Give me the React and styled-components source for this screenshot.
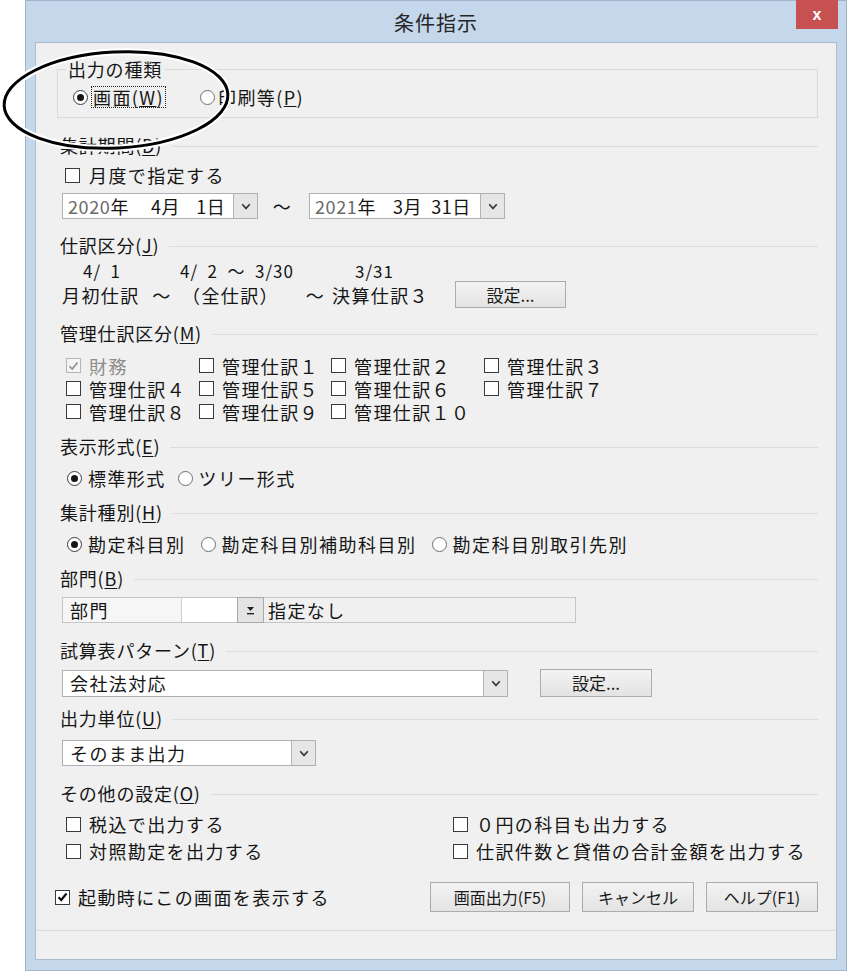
import React from "react";
import styled, { createGlobalStyle } from "styled-components";

const FONT = `"Noto Sans CJK JP", "Noto Sans", sans-serif`;

const Global = createGlobalStyle`
  html, body { margin: 0; padding: 0; background: #ffffff; }
  body { font-family: ${FONT}; color: #151515; }
  * { box-sizing: border-box; }
  fieldset { margin: 0; }
`;

const Page = styled.div`
  position: relative;
  width: 848px;
  height: 972px;
  overflow: hidden;
`;

const Frame = styled.div`
  margin-left: 25px;
  width: 822px;
  height: 971px;
  background: #c4d7eb;
  border: 1px solid #a2b6cb;
  display: flex;
  flex-direction: column;
`;

const TitleBar = styled.div`
  height: 41px;
  display: grid;
  grid-template-columns: 1fr auto 1fr;
  align-items: start;
`;

const Title = styled.div`
  grid-column: 2;
  align-self: center;
  font-size: 20px;
  letter-spacing: 1px;
  color: #262626;
  margin-top: 2px;
`;

const CloseButton = styled.div`
  grid-column: 3;
  justify-self: end;
  margin-right: 8px;
  margin-top: -1px;
  width: 42px;
  height: 29px;
  background: #c75050;
  color: #fff;
  display: flex;
  align-items: center;
  justify-content: center;
  font-family: "Liberation Sans", sans-serif;
  font-weight: bold;
  font-size: 16px;
`;

const Client = styled.div`
  flex: 1;
  margin: 0 9px 10px 9px;
  background: #f0f0f0;
  border: 1px solid #a9bcd0;
  display: flex;
  flex-direction: column;
`;

const Content = styled.div`
  flex: 1;
  padding: 0 18px 0 24px;
  display: flex;
  flex-direction: column;
  font-size: 18px;
  line-height: 22px;
  letter-spacing: 1.4px;
`;

const Footer = styled.div`
  height: 29px;
  border-top: 1px solid #dcdcdc;
`;

const GroupBox = styled.fieldset`
  margin: 15px 0 0 -3px;
  border: 1px solid #dadada;
  padding: 0 0 9px 0;
  min-width: 0;
`;

const Legend = styled.legend`
  font-size: 18px;
  line-height: 22px;
  letter-spacing: 0.8px;
  padding: 0 2px;
  margin-left: 8px;
`;

const Header = styled.div`
  display: flex;
  align-items: center;
  height: 22px;
  margin-top: ${(p) => p.$mt}px;
  letter-spacing: 0.8px;
  white-space: nowrap;
  &::after {
    content: "";
    flex: 1;
    height: 1px;
    margin: 2px 0 0 10px;
    background: #dcdcdc;
  }
  u { text-decoration-thickness: 1px; text-underline-offset: 2px; }
`;

const Row = styled.div`
  display: flex;
  align-items: center;
  height: ${(p) => p.$h || 22}px;
  margin-top: ${(p) => p.$mt || 0}px;
  padding-left: ${(p) => p.$pl || 0}px;
  letter-spacing: ${(p) => p.$ls ?? 1.4}px;
  white-space: nowrap;
`;

const Item = styled.label`
  display: flex;
  align-items: center;
  gap: ${(p) => p.$gap ?? 8}px;
  margin-left: ${(p) => p.$ml || 0}px;
  color: ${(p) => (p.$disabled ? "#8c8c8c" : "inherit")};
  white-space: nowrap;
`;

const BoxMark = styled.span`
  flex: none;
  width: 15px;
  height: 15px;
  border: 1px solid ${(p) => (p.$disabled ? "#b5b5b5" : "#3a3a3a")};
  background: ${(p) => (p.$disabled ? "#f4f4f4" : "#ffffff")};
  display: flex;
  align-items: center;
  justify-content: center;
`;

const RadioMark = styled.span`
  flex: none;
  width: 15px;
  height: 15px;
  border-radius: 50%;
  border: 1px solid ${(p) => (p.$on ? "#3c3c3c" : "#6f6f6f")};
  background: #ffffff;
  display: flex;
  align-items: center;
  justify-content: center;
  &::after {
    content: "";
    width: 7px;
    height: 7px;
    border-radius: 50%;
    background: ${(p) => (p.$on ? "#151515" : "transparent")};
  }
`;

const FocusText = styled.span`
  border: 1px dotted #222;
  padding: 0 1px;
  line-height: 20px;
`;

const Check = ({ checked, disabled }) => (
  <BoxMark $disabled={disabled}>
    {checked && (
      <svg width="11" height="10" viewBox="0 0 11 10">
        <path
          d="M1.5 5.2 L4.2 8 L9.5 1.5"
          fill="none"
          stroke={disabled ? "#8f8f8f" : "#111"}
          strokeWidth={disabled ? 1.6 : 2.2}
        />
      </svg>
    )}
  </BoxMark>
);

const CheckItem = ({ children, checked, disabled, ml, gap }) => (
  <Item $disabled={disabled} $ml={ml} $gap={gap}>
    <Check checked={checked} disabled={disabled} />
    <span>{children}</span>
  </Item>
);

const RadioItem = ({ children, on, ml, gap = 6 }) => (
  <Item $ml={ml} $gap={gap}>
    <RadioMark $on={on} />
    {children}
  </Item>
);

const Combo = styled.div`
  display: flex;
  align-items: stretch;
  width: ${(p) => p.$w}px;
  height: ${(p) => p.$h || 26}px;
  margin-left: 2px;
  background: #ffffff;
  border: 1px solid #aeb0b5;
  flex: none;
`;

const ComboText = styled.div`
  flex: 1;
  display: flex;
  align-items: center;
  padding-left: ${(p) => p.$pl ?? 7}px;
  white-space: pre;
  letter-spacing: ${(p) => p.$ls ?? 1.4}px;
`;

const Gray = styled.span`
  color: #6a6a6a;
  letter-spacing: 0.6px;
`;

const DatePart = styled.span`
  margin-left: ${(p) => p.$ml || 0}px;
`;

const DropBtn = styled.div`
  width: 24px;
  flex: none;
  background: #e6e6e6;
  border-left: 1px solid #b4b4b4;
  display: flex;
  align-items: center;
  justify-content: center;
`;

const Chevron = () => (
  <svg width="10" height="7" viewBox="0 0 10 7">
    <path d="M1.2 1.2 L5 5.4 L8.8 1.2" fill="none" stroke="#3a3a3a" strokeWidth="1.7" />
  </svg>
);

const Tilde = styled.span`
  width: 49px;
  text-align: center;
  flex: none;
`;

const Button = styled.div`
  width: ${(p) => p.$w}px;
  height: ${(p) => p.$h || 30}px;
  margin-left: ${(p) => p.$ml || 0}px;
  flex: none;
  display: flex;
  align-items: center;
  justify-content: center;
  background: linear-gradient(#f3f3f3, #e3e3e3);
  border: 1px solid #acacac;
  font-size: ${(p) => p.$fs || 16}px;
  letter-spacing: ${(p) => p.$ls ?? 0}px;
  color: #1a1a1a;
`;

const JournalGrid = styled.div`
  display: grid;
  grid-template-columns: 80px 40px 117px 33px 105px auto;
  grid-template-rows: 19px 27px;
  row-gap: 1px;
  margin: 5px 0 0 2px;
  align-items: center;
  white-space: nowrap;
`;

const DateLabel = styled.span`
  grid-row: 1;
  grid-column: ${(p) => p.$col};
  justify-self: ${(p) => p.$justify || "center"};
  padding-left: ${(p) => p.$pl || 0}px;
  font-size: 17px;
  letter-spacing: 1px;
  white-space: pre;
`;

const JournalCell = styled.span`
  grid-row: 2;
  grid-column: ${(p) => p.$col};
  justify-self: ${(p) => p.$justify || "start"};
  margin-left: ${(p) => p.$ml || 0}px;
`;

const MgmtGrid = styled.div`
  display: grid;
  grid-template-columns: 133px 132px 153px auto;
  grid-auto-rows: 23px;
  margin-top: 10px;
  padding-left: 6px;
  align-items: center;
`;

const OtherGrid = styled.div`
  display: grid;
  grid-template-columns: 387px auto;
  grid-auto-rows: 24px;
  row-gap: 3px;
  margin-top: 8px;
  padding-left: 6px;
  align-items: center;
`;

const Field = styled.div`
  display: flex;
  width: 514px;
  height: 26px;
  margin: 8px 0 0 2px;
  border: 1px solid #c6c6c6;
  background: #f0f0f0;
`;

const FieldLabel = styled.div`
  width: 118px;
  display: flex;
  align-items: center;
  padding-left: 7px;
  background: #f6f6f6;
`;

const FieldInput = styled.div`
  width: 56px;
  background: #ffffff;
  border-left: 1px solid #d0d0d0;
`;

const FieldBtn = styled.div`
  width: 27px;
  background: #e4e4e4;
  border: 1px solid #a8a8a8;
  margin: -1px 0;
  display: flex;
  align-items: center;
  justify-content: center;
`;

const FieldValue = styled.div`
  flex: 1;
  display: flex;
  align-items: center;
  padding-left: 4px;
  background: #f0f0f0;
`;

const BottomRow = styled.div`
  display: flex;
  align-items: center;
  height: 30px;
  margin-top: 19px;
`;

const Buttons = styled.div`
  margin-left: auto;
  display: flex;
  gap: 12px;
`;

const Annotation = styled.svg`
  position: absolute;
  left: 0;
  top: 46px;
  pointer-events: none;
`;

export default function App() {
  return (
    <Page>
      <Global />
      <Frame>
        <TitleBar>
          <Title>条件指示</Title>
          <CloseButton>x</CloseButton>
        </TitleBar>
        <Client>
          <Content>
            <GroupBox>
              <Legend>出力の種類</Legend>
              <Row $mt={6} $pl={15}>
                <RadioItem on gap={3}>
                  <FocusText>
                    画面(<u>W</u>)
                  </FocusText>
                </RadioItem>
                <RadioItem ml={34} gap={3}>
                  <span>
                    印刷等(<u>P</u>)
                  </span>
                </RadioItem>
              </Row>
            </GroupBox>

            <Header $mt={16}>
              集計期間(<u>D</u>)
            </Header>
            <Row $mt={8} $pl={5}>
              <CheckItem gap={9}>月度で指定する</CheckItem>
            </Row>
            <Row $mt={7} $h={26}>
              <Combo $w={196}>
                <ComboText $pl={5} $ls={0.6}>
                  <Gray>2020</Gray>年<DatePart $ml={22}>4月</DatePart>
                  <DatePart $ml={16}>1日</DatePart>
                </ComboText>
                <DropBtn>
                  <Chevron />
                </DropBtn>
              </Combo>
              <Tilde>～</Tilde>
              <Combo $w={196}>
                <ComboText $pl={5} $ls={0.6}>
                  <Gray>2021</Gray>年<DatePart $ml={17}>3月</DatePart>
                  <DatePart $ml={9}>31日</DatePart>
                </ComboText>
                <DropBtn>
                  <Chevron />
                </DropBtn>
              </Combo>
            </Row>

            <Header $mt={15}>
              仕訳区分(<u>J</u>)
            </Header>
            <JournalGrid>
              <DateLabel $col="1">{"4/\u20021"}</DateLabel>
              <DateLabel $col="2 / 5">{"4/\u20022\u2002～\u20023/30"}</DateLabel>
              <DateLabel $col="5" $justify="start" $pl={23}>
                3/31
              </DateLabel>
              <JournalCell $col="1">月初仕訳</JournalCell>
              <JournalCell $col="2" $justify="center">～</JournalCell>
              <JournalCell $col="3">（全仕訳）</JournalCell>
              <JournalCell $col="4" $justify="center">～</JournalCell>
              <JournalCell $col="5">決算仕訳３</JournalCell>
              <JournalCell $col="6" $ml={18}>
                <Button $w={111} $h={27} $fs={17}>
                  設定...
                </Button>
              </JournalCell>
            </JournalGrid>

            <Header $mt={14}>
              管理仕訳区分(<u>M</u>)
            </Header>
            <MgmtGrid>
              <CheckItem checked disabled>財務</CheckItem>
              <CheckItem>管理仕訳１</CheckItem>
              <CheckItem>管理仕訳２</CheckItem>
              <CheckItem>管理仕訳３</CheckItem>
              <CheckItem>管理仕訳４</CheckItem>
              <CheckItem>管理仕訳５</CheckItem>
              <CheckItem>管理仕訳６</CheckItem>
              <CheckItem>管理仕訳７</CheckItem>
              <CheckItem>管理仕訳８</CheckItem>
              <CheckItem>管理仕訳９</CheckItem>
              <CheckItem>管理仕訳１０</CheckItem>
            </MgmtGrid>

            <Header $mt={12}>
              表示形式(<u>E</u>)
            </Header>
            <Row $mt={10} $pl={7}>
              <RadioItem on>標準形式</RadioItem>
              <RadioItem ml={12}>ツリー形式</RadioItem>
            </Row>

            <Header $mt={12}>
              集計種別(<u>H</u>)
            </Header>
            <Row $mt={10} $pl={7} $ls={1.5}>
              <RadioItem on>勘定科目別</RadioItem>
              <RadioItem ml={15}>勘定科目別補助科目別</RadioItem>
              <RadioItem ml={15}>勘定科目別取引先別</RadioItem>
            </Row>

            <Header $mt={12}>
              部門(<u>B</u>)
            </Header>
            <Field>
              <FieldLabel>部門</FieldLabel>
              <FieldInput />
              <FieldBtn>
                <svg width="9" height="10" viewBox="0 0 9 10">
                  <path d="M1 2 L8 2 L4.5 6 Z" fill="#222" />
                  <rect x="1" y="8" width="7" height="1.4" fill="#222" />
                </svg>
              </FieldBtn>
              <FieldValue>指定なし</FieldValue>
            </Field>

            <Header $mt={16}>
              試算表パターン(<u>T</u>)
            </Header>
            <Row $mt={8} $h={28}>
              <Combo $w={446} $h={27}>
                <ComboText>会社法対応</ComboText>
                <DropBtn>
                  <Chevron />
                </DropBtn>
              </Combo>
              <Button $w={112} $h={28} $ml={32} $fs={17}>
                設定...
              </Button>
            </Row>

            <Header $mt={10}>
              出力単位(<u>U</u>)
            </Header>
            <Row $mt={11} $h={26}>
              <Combo $w={254}>
                <ComboText>そのまま出力</ComboText>
                <DropBtn>
                  <Chevron />
                </DropBtn>
              </Combo>
            </Row>

            <Header $mt={16}>
              その他の設定(<u>O</u>)
            </Header>
            <OtherGrid>
              <CheckItem>税込で出力する</CheckItem>
              <CheckItem>０円の科目も出力する</CheckItem>
              <CheckItem>対照勘定を出力する</CheckItem>
              <CheckItem>仕訳件数と貸借の合計金額を出力する</CheckItem>
            </OtherGrid>

            <BottomRow>
              <Item $ml={-5} $gap={8}>
                <Check checked />
                <span>起動時にこの画面を表示する</span>
              </Item>
              <Buttons>
                <Button $w={140}>画面出力(F5)</Button>
                <Button $w={112}>キャンセル</Button>
                <Button $w={112}>ヘルプ(F1)</Button>
              </Buttons>
            </BottomRow>
          </Content>
          <Footer />
        </Client>
      </Frame>
      <Annotation width="236" height="110" viewBox="0 0 236 110">
        <g transform="rotate(-3 116 54)">
          <ellipse cx="116" cy="54" rx="112" ry="48" fill="none" stroke="#ffffff" strokeWidth="7" />
          <ellipse cx="116" cy="54" rx="112" ry="48" fill="none" stroke="#000000" strokeWidth="3" />
        </g>
      </Annotation>
    </Page>
  );
}
